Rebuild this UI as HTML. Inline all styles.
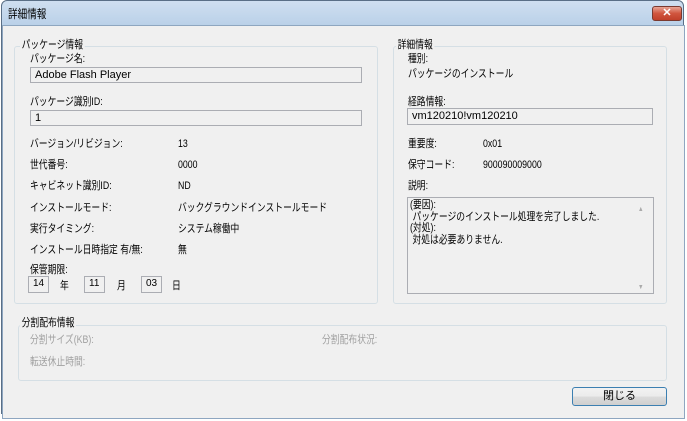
<!DOCTYPE html><html><head><meta charset="utf-8"><style>
*{margin:0;padding:0;box-sizing:border-box}
body{width:687px;height:421px;background:#fff;position:relative;overflow:hidden;font-family:"Liberation Sans","Noto Sans CJK JP",sans-serif;font-size:11px;color:#000}
.win{position:absolute;left:1px;top:0;width:683px;height:414px;border:1px solid #5a6f86;border-radius:6px 6px 0 0;background:linear-gradient(#cfdff0,#b9d0e8 25px);}
.body{position:absolute;left:2px;top:25px;right:2px;bottom:2px;background:#f0f0f0;border:1px solid #8ea6c0}
.t{position:absolute;white-space:nowrap;line-height:13px;transform:scaleX(0.8);transform-origin:left center}
.g{position:absolute;border:1px solid #d5dfe5;border-radius:3px}
.lg{position:absolute;background:#f0f0f0;padding:0 2px;white-space:nowrap;line-height:13px;transform:scaleX(0.8);transform-origin:left center}
.tb{position:absolute;border:1px solid #abadb3;background:#f0f0f0;padding-left:4px;line-height:14px;white-space:nowrap}
.gray{color:#a0a0a0}
.n{transform:none}
.ta span{display:block;transform:scaleX(0.8);transform-origin:left center;white-space:nowrap}
</style></head><body>
<div class="win"></div>
<div class="t" style="left:8px;top:8px;font-size:12px">詳細情報</div>
<div style="position:absolute;left:652px;top:6px;width:30px;height:15px;border:1px solid #7a3a30;border-radius:3px;background:linear-gradient(#e8a595,#d0553e 50%,#c0402a);color:#fff;font-size:11px;font-weight:bold;text-align:center;line-height:13px">✕</div>
<div class="body"></div>

<div class="g" style="left:14px;top:46px;width:364px;height:258px"></div>
<div class="lg" style="left:20px;top:39px">パッケージ情報</div>
<div class="t" style="left:30px;top:53px">パッケージ名:</div>
<div class="tb" style="left:30px;top:67px;width:332px;height:16px">Adobe Flash Player</div>
<div class="t" style="left:30px;top:96px">パッケージ識別ID:</div>
<div class="tb" style="left:30px;top:110px;width:332px;height:16px">1</div>
<div class="t" style="left:30px;top:138px">バージョン/リビジョン:</div><div class="t" style="left:178px;top:138px">13</div>
<div class="t" style="left:30px;top:159px">世代番号:</div><div class="t" style="left:178px;top:159px">0000</div>
<div class="t" style="left:30px;top:180px">キャビネット識別ID:</div><div class="t" style="left:178px;top:180px">ND</div>
<div class="t" style="left:30px;top:202px">インストールモード:</div><div class="t" style="left:178px;top:202px">バックグラウンドインストールモード</div>
<div class="t" style="left:30px;top:223px">実行タイミング:</div><div class="t" style="left:178px;top:223px">システム稼働中</div>
<div class="t" style="left:30px;top:244px">インストール日時指定 有/無:</div><div class="t" style="left:178px;top:244px">無</div>
<div class="t" style="left:30px;top:264px">保管期限:</div>
<div class="tb" style="left:28px;top:276px;width:21px;height:17px;font-size:10px">14</div><div class="t" style="left:60px;top:280px">年</div>
<div class="tb" style="left:84px;top:276px;width:21px;height:17px;font-size:10px">11</div><div class="t" style="left:117px;top:280px">月</div>
<div class="tb" style="left:141px;top:276px;width:21px;height:17px;font-size:10px">03</div><div class="t" style="left:172px;top:280px">日</div>

<div class="g" style="left:393px;top:46px;width:274px;height:258px"></div>
<div class="lg" style="left:396px;top:39px">詳細情報</div>
<div class="t" style="left:408px;top:53px">種別:</div>
<div class="t" style="left:408px;top:68px">パッケージのインストール</div>
<div class="t" style="left:408px;top:96px">経路情報:</div>
<div class="tb" style="left:407px;top:108px;width:246px;height:17px">vm120210!vm120210</div>
<div class="t" style="left:408px;top:138px">重要度:</div><div class="t" style="left:483px;top:138px">0x01</div>
<div class="t" style="left:408px;top:159px">保守コード:</div><div class="t" style="left:483px;top:159px">900090009000</div>
<div class="t" style="left:408px;top:180px">説明:</div>
<div class="ta" style="position:absolute;left:407px;top:197px;width:247px;height:97px;border:1px solid #abadb3;background:#f0f0f0;line-height:11.5px;padding:2px 0 0 2px"><span>(要因):</span><span>&nbsp;パッケージのインストール処理を完了しました.</span><span>(対処):</span><span>&nbsp;対処は必要ありません.</span></div>
<div class="t" style="left:638px;top:203px;color:#aaa;font-size:7px">▲</div>
<div class="t" style="left:638px;top:281px;color:#aaa;font-size:7px">▼</div>

<div class="g" style="left:18px;top:325px;width:649px;height:56px"></div>
<div class="lg" style="left:20px;top:317px">分割配布情報</div>
<div class="t gray" style="left:30px;top:334px">分割サイズ(KB):</div>
<div class="t gray" style="left:322px;top:334px">分割配布状況:</div>
<div class="t gray" style="left:30px;top:356px">転送休止時間:</div>

<div style="position:absolute;left:572px;top:387px;width:95px;height:19px;border:1px solid #3c7fb1;border-radius:3px;background:linear-gradient(#f2f2f2,#ebebeb 50%,#dcdcdc 51%,#cfcfcf);text-align:center;line-height:17px">閉じる</div>
</body></html>
